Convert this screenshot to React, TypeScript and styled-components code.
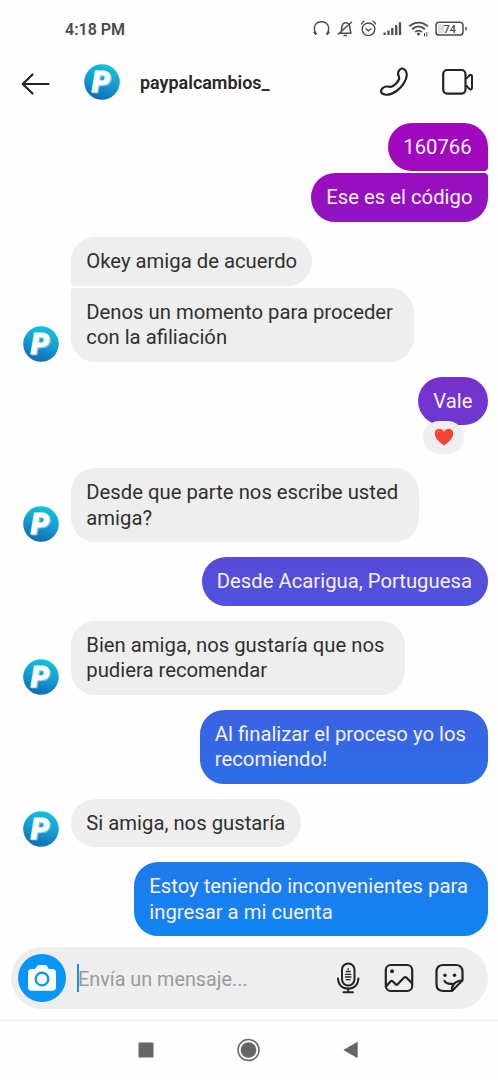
import React from 'react';
import styled, { createGlobalStyle } from 'styled-components';

const GlobalStyle = createGlobalStyle`
  * { box-sizing: border-box; }
  body { margin: 0; background: #fefefe; font-family: Roboto, sans-serif; }
  svg { display: block; flex: none; }
`;

const Screen = styled.div`
  width: 498px;
  height: 1080px;
  overflow: hidden;
  display: flex;
  flex-direction: column;
  background: #fefefe;
`;

const StatusBar = styled.div`
  height: 58px;
  padding: 0 30px 0 65px;
  display: flex;
  align-items: center;
  justify-content: space-between;
`;

const Clock = styled.span`
  font-size: 16px;
  font-weight: 600;
  line-height: 20px;
  padding-top: 1px;
  color: #4a4a4a;
`;

const Header = styled.header`
  height: 48px;
  padding: 0 24px 0 21px;
  display: flex;
  align-items: center;
`;

const BackButton = styled.div`
  width: 63px;
  padding-top: 3px;
`;

const UserName = styled.h1`
  flex: 1;
  margin: 2px 0 0 20px;
  font-size: 17.95px;
  line-height: 22px;
  font-weight: 600;
  color: #262626;
`;

const Actions = styled.div`
  display: flex;
  align-items: center;
  gap: 33px;
`;

const Thread = styled.main`
  height: 841px;
  padding: 16.5px 10px 0 23px;
  display: flex;
  flex-direction: column;
  gap: 15px;
`;

const Group = styled.div<{ $mine?: boolean }>`
  display: flex;
  align-items: flex-end;
  gap: 12px;
  justify-content: ${(p) => (p.$mine ? 'flex-end' : 'flex-start')};
`;

const Stack = styled.div<{ $mine?: boolean }>`
  display: flex;
  flex-direction: column;
  gap: 2.2px;
  align-items: ${(p) => (p.$mine ? 'flex-end' : 'flex-start')};
`;

const Bubble = styled.div<{ $fill?: string; $radius?: string; $width: number; $liked?: boolean }>`
  position: relative;
  width: ${(p) => p.$width}px;
  margin-bottom: ${(p) => (p.$liked ? 28 : 0)}px;
  padding: 12.15px 0 11.2px 15.3px;
  border-radius: ${(p) => p.$radius || '24.3px'};
  background: ${(p) => p.$fill || '#eeeeee'};
  color: ${(p) => (p.$fill ? '#f8f0ff' : '#303030')};
  font-size: 20.27px;
  line-height: 25.3px;
  white-space: pre;
`;

const Reaction = styled.div`
  position: absolute;
  left: 5px;
  top: 44px;
  width: 41px;
  height: 33px;
  border-radius: 16.5px;
  background: #efefef;
  display: flex;
  align-items: center;
  justify-content: center;
`;

const Composer = styled.div`
  height: 62px;
  margin: 0 10px 0 11px;
  padding: 0 24px 0 7px;
  border-radius: 31px;
  background: #eeeeee;
  display: flex;
  align-items: center;
`;

const CameraButton = styled.div`
  width: 48px;
  height: 48px;
  border-radius: 50%;
  background: #0895f8;
  display: flex;
  align-items: center;
  justify-content: center;
`;

const Caret = styled.div`
  width: 2px;
  height: 28px;
  margin-left: 11px;
  background: #1593ec;
`;

const Placeholder = styled.span`
  flex: 1;
  margin-left: -1px;
  padding-top: 3px;
  font-size: 19.8px;
  line-height: 26px;
  color: #9b9b9b;
  white-space: nowrap;
`;

const Tools = styled.div`
  display: flex;
  align-items: center;
`;

const NavBar = styled.nav`
  height: 60px;
  margin-top: 11px;
  padding: 0 2px 2px 0;
  border-top: 1px solid #eeeeee;
  display: flex;
  align-items: center;
  justify-content: center;
`;

function Avatar({ size }: { size: number }) {
  return (
    <svg width={size} height={size} viewBox="0 0 36 36">
      <defs>
        <linearGradient id="coin" x1="0.65" y1="0" x2="0.35" y2="1">
          <stop offset="0" stopColor="#13c3dc" />
          <stop offset="0.5" stopColor="#149cd2" />
          <stop offset="1" stopColor="#1268b2" />
        </linearGradient>
      </defs>
      <circle cx="18" cy="18" r="17.8" fill="url(#coin)" />
      <g fontFamily="Roboto, sans-serif" fontSize="29" fontWeight="900" fontStyle="italic">
        <text x="8.900" y="28.700" fill="#4fb0dc" stroke="#9cd6ee" strokeWidth="0.6">P</text>
        <text x="7.700" y="27.600" fill="#ffffff" stroke="#ffffff" strokeWidth="0.9">P</text>
      </g>
    </svg>
  );
}

function StatusIcons() {
  return (
    <svg width="158" height="24" viewBox="310 17 158 24" fill="none" stroke="#4c4c4c" strokeWidth="1.4">
      <path d="M315.500 33.500C312.500 26 316 21.800 321.500 21.800S330.500 26 327.500 33.500" />
      <path d="M314 31.500l2.300 3M329 31.500l-2.300 3" strokeWidth="2.300" />
      <path d="M339 33.300h12.500M340.800 32.800c1.300-1.800.5-5 1.300-7.200 1-3.500 5-3.800 6.900-1.200 1.700 2.500.5 5.800 2 8.400M343.500 35.500h3.500M337.800 34.500L352 21.800" strokeWidth="1.500" />
      <circle cx="368.500" cy="29.300" r="6.300" />
      <path d="M365.500 28.500l3 2.300 3-2.300M361.300 24.500c.5-1.800 1.700-3 3.200-3.700M375.700 24.500c-.5-1.800-1.700-3-3.200-3.700" />
      <path d="M384.600 35v-2.500M388.500 35v-4.500M392.300 35v-7M396.200 35v-10M400 35V22.300" strokeWidth="2.300" />
      <path d="M409.300 26.300c5.500-5 13-5 18.500 0M412.200 29.200c4-3.500 8.700-3.500 12.700 0M415.200 32c2.300-1.800 4.500-1.800 6.700 0" strokeWidth="1.800" />
      <circle cx="418.500" cy="34" r="1.500" fill="#4c4c4c" stroke="none" />
      <path d="M424.500 33v3.500M426.800 32v4.500" strokeWidth="1" />
      <rect x="436" y="22.300" width="27" height="12.800" rx="3.200" strokeWidth="1.500" />
      <rect x="438" y="24.300" width="6" height="8.800" fill="#dddddd" stroke="none" />
      <path d="M466 27v3.500" strokeWidth="1.500" />
      <text x="443.500" y="32.700" fontFamily="Roboto, sans-serif" fontSize="11" fontWeight="500" fill="#4c4c4c" stroke="none">74</text>
    </svg>
  );
}

const ink = { fill: 'none', stroke: '#242424', strokeWidth: 2.2, strokeLinecap: 'round', strokeLinejoin: 'round' } as const;

const BackIcon = () => (
  <svg width="30" height="24" viewBox="21 72 30 24" {...ink}>
    <path d="M48.500 84H23M32.500 74.500L22.800 84l9.700 9.500" />
  </svg>
);

const PhoneIcon = () => (
  <svg width="30" height="30" viewBox="379 67 30 30" {...ink}>
    <path d="M402.300 68.500C404.800 68.700 406.900 71.500 406.800 75C406.600 80.500 402 87 396.500 91C392.500 93.800 388.500 94.900 385.500 94.700C382.800 94.500 380.800 92.800 381 90.800C381.300 88.500 384 86.600 386.500 86.500C388.800 86.400 390.300 87.400 392.500 86.300C395.300 84.800 397.800 82 399 79.300C400 77 397.900 75.800 398 73.500C398.200 70.800 400.200 68.400 402.300 68.500Z" />
  </svg>
);

const VideoIcon = () => (
  <svg width="32" height="28" viewBox="442 68 32 28" {...ink}>
    <rect x="443.200" y="70" width="22.300" height="23.600" rx="4" />
    <path d="M466 78.500c1.800-.2 2.300-2.800 4-3.500 1.300-.4 2 .3 2 1.500v11.300c0 1.200-.7 1.900-2 1.500-1.700-.7-2.200-3.300-4-3.500" strokeWidth="2" />
  </svg>
);

const Heart = () => (
  <svg width="20" height="18" viewBox="0 0 20 18">
    <path d="M10 17.500C5.500 14.500.8 10.500.8 5.600.8 2.800 2.700.8 5.300.8 7.300.8 9 2 10 3.700 11 2 12.700.8 14.700.8c2.600 0 4.500 2 4.500 4.800 0 4.900-4.700 8.900-9.200 11.900Z" fill="#f44336" />
    <path d="M3.300 4.500c.5-1 1.300-1.500 2.200-1.500" stroke="#ff7669" strokeWidth="1.200" fill="none" strokeLinecap="round" />
  </svg>
);

const CameraIcon = () => (
  <svg width="30" height="28" viewBox="0 0 30 28">
    <path d="M4.500 5H7c1.300 0 1.700-.6 2.300-1.800C10 1.700 10.700 1 12 1h6c1.300 0 2 .7 2.700 2.200C21.300 4.400 21.700 5 23 5h2.500C27.700 5 29 6.300 29 8.500v14.700c0 2.200-1.300 3.500-3.500 3.500h-21C2.300 26.700 1 25.400 1 23.200V8.500C1 6.300 2.300 5 4.500 5Z" fill="#fff" />
    <circle cx="15" cy="15" r="6.300" fill="#fff" stroke="#0895f8" strokeWidth="2.300" />
  </svg>
);

const ToolIcons = () => (
  <svg width="128" height="36" viewBox="336 960 128 36" {...ink} strokeWidth={2.2}>
    <rect x="342" y="963.500" width="12.500" height="22" rx="6.250" strokeWidth="2" />
    <path d="M338 978.500c.3 6.500 4.300 10 10.200 10s9.900-3.500 10.200-10M348.200 989v3M343.500 992.300h9.500" strokeWidth="2" />
    <path d="M348.200 968.500v1M346.300 971.500h3.800M345.500 974.300h5.400M345.500 977h5.400M346.300 979.700h3.800" strokeWidth="1.300" />
    <rect x="385.800" y="965" width="26.400" height="26" rx="5" />
    <path d="M386 986.500l4.700-5.200c.7-.6 1.200-.6 1.900 0l3 3c.7.700 1.200.7 2 0l6.500-6.700c.8-.8 1.500-.8 2.300 0l5.700 5.600" />
    <circle cx="392" cy="971.200" r="2" fill="#242424" stroke="none" />
    <path d="M452 991h-8.500c-4.500 0-7-2.500-7-7v-12c0-4.500 2.500-7 7-7h12c4.500 0 7 2.500 7 7v8.200L452 991c-.8-6 3-10.200 10.500-10.500M444.500 981c1.500 2.300 4.200 3.300 7.500 2.800" />
    <circle cx="445" cy="975.300" r="1.700" fill="#242424" stroke="none" />
    <circle cx="454.500" cy="975.300" r="1.700" fill="#242424" stroke="none" />
  </svg>
);

const NavIcons = () => (
  <svg width="220" height="28" viewBox="138 1036 220 28" fill="#666666">
    <rect x="138.500" y="1042.500" width="15" height="15" />
    <circle cx="248.500" cy="1050" r="10.500" fill="none" stroke="#666666" strokeWidth="1.500" />
    <circle cx="248.500" cy="1050" r="7.800" />
    <path d="M343.300 1050l14.400-8.300v16.600Z" />
  </svg>
);

type Message = { text: string; width: number; fill?: string; radius?: string; liked?: boolean };

const groups: { mine?: boolean; items: Message[] }[] = [
  {
    mine: true,
    items: [
      { text: '160766', width: 100, fill: 'linear-gradient(#a306bd, #9d0bbe)', radius: '24.3px 24.3px 4px 24.3px' },
      { text: 'Ese es el código', width: 177, fill: 'linear-gradient(#9a0dbf, #9214c1)', radius: '24.3px 4px 24.3px 24.3px' },
    ],
  },
  {
    items: [
      { text: 'Okey amiga de acuerdo', width: 241, radius: '24.3px 24.3px 24.3px 4px' },
      { text: 'Denos un momento para proceder\ncon la afiliación', width: 342.500, radius: '4px 24.3px 24.3px 24.3px' },
    ],
  },
  { mine: true, items: [{ text: 'Vale', width: 70, fill: 'linear-gradient(#7730cc, #6d38d0)', liked: true }] },
  { items: [{ text: 'Desde que parte nos escribe usted\namiga?', width: 347.500 }] },
  { mine: true, items: [{ text: 'Desde Acarigua, Portuguesa', width: 286.500, fill: 'linear-gradient(#574bd8, #4e53dc)' }] },
  { items: [{ text: 'Bien amiga, nos gustaría que nos\npudiera recomendar', width: 334 }] },
  { mine: true, items: [{ text: 'Al finalizar el proceso yo los\nrecomiendo!', width: 288.500, fill: 'linear-gradient(#3b62e2, #2c6ee9)' }] },
  { items: [{ text: 'Si amiga, nos gustaría', width: 230 }] },
  { mine: true, items: [{ text: 'Estoy teniendo inconvenientes para\ningresar a mi cuenta', width: 354, fill: 'linear-gradient(#1f79eb, #1086f4)' }] },
];

export default function App() {
  return (
    <Screen>
      <GlobalStyle />
      <StatusBar>
        <Clock>4:18 PM</Clock>
        <StatusIcons />
      </StatusBar>
      <Header>
        <BackButton><BackIcon /></BackButton>
        <Avatar size={36} />
        <UserName>paypalcambios_</UserName>
        <Actions>
          <PhoneIcon />
          <VideoIcon />
        </Actions>
      </Header>
      <Thread>
        {groups.map((group, i) => (
          <Group key={i} $mine={group.mine}>
            {!group.mine && <Avatar size={36} />}
            <Stack $mine={group.mine}>
              {group.items.map((m) => (
                <Bubble key={m.text} $fill={m.fill} $radius={m.radius} $width={m.width} $liked={m.liked}>
                  {m.text}
                  {m.liked && <Reaction><Heart /></Reaction>}
                </Bubble>
              ))}
            </Stack>
          </Group>
        ))}
      </Thread>
      <Composer>
        <CameraButton><CameraIcon /></CameraButton>
        <Caret />
        <Placeholder>Envía un mensaje...</Placeholder>
        <Tools><ToolIcons /></Tools>
      </Composer>
      <NavBar><NavIcons /></NavBar>
    </Screen>
  );
}
